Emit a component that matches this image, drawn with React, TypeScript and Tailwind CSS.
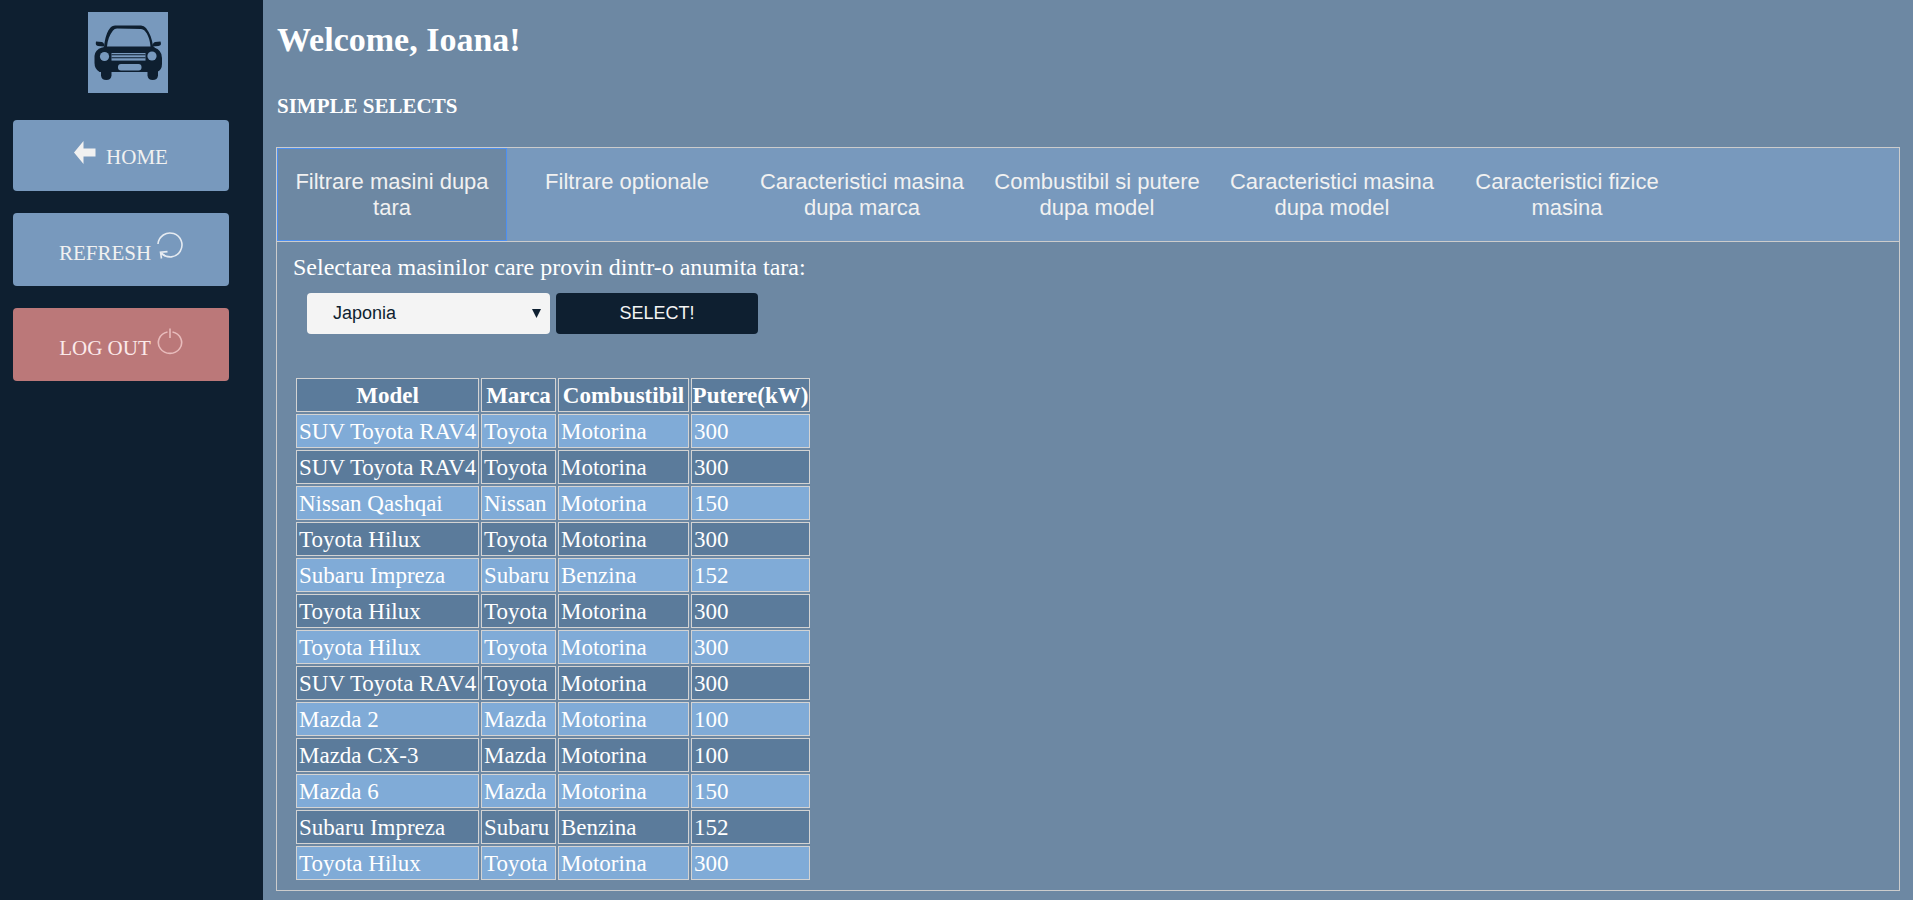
import { useState } from 'react';

const tabs = [
  'Filtrare masini dupa tara',
  'Filtrare optionale',
  'Caracteristici masina dupa marca',
  'Combustibil si putere dupa model',
  'Caracteristici masina dupa model',
  'Caracteristici fizice masina',
];

const cars = [
  ['SUV Toyota RAV4', 'Toyota', 'Motorina', '300'],
  ['SUV Toyota RAV4', 'Toyota', 'Motorina', '300'],
  ['Nissan Qashqai', 'Nissan', 'Motorina', '150'],
  ['Toyota Hilux', 'Toyota', 'Motorina', '300'],
  ['Subaru Impreza', 'Subaru', 'Benzina', '152'],
  ['Toyota Hilux', 'Toyota', 'Motorina', '300'],
  ['Toyota Hilux', 'Toyota', 'Motorina', '300'],
  ['SUV Toyota RAV4', 'Toyota', 'Motorina', '300'],
  ['Mazda 2', 'Mazda', 'Motorina', '100'],
  ['Mazda CX-3', 'Mazda', 'Motorina', '100'],
  ['Mazda 6', 'Mazda', 'Motorina', '150'],
  ['Subaru Impreza', 'Subaru', 'Benzina', '152'],
  ['Toyota Hilux', 'Toyota', 'Motorina', '300'],
];

function CarLogo() {
  return (
    <svg viewBox="0 0 80 81" className="block h-[81px] w-20 bg-[#7899bd]" role="img" aria-label="Car">
      <g fill="#0e1f30">
        <path
          fillRule="evenodd"
          d="M16 35 C17 26 19 19 23 15 Q24.500 13.500 27 13.500 L53 13.500 Q56 13.500 58 16 C62 21 64 27 65 34 L68 37 L13 37 Z M19 34.500 L62.500 34.500 C62 28 60 22 56.500 18.500 Q55 17 53 17 L29 16.500 Q26.500 16.500 25 18.500 C21.500 23 19.500 28 19 34.500 Z"
        />
        <path d="M8 29.500 L14 30 Q17 31.500 16 34.500 L10 34 Q7 33.500 8 29.500 Z" />
        <path d="M72.500 29.500 L67 30 Q64 31.500 64.500 34.500 L70.500 34 Q74 33.500 72.500 29.500 Z" />
        <path d="M14 35.500 L66 35.500 Q74 38 74 46 L74 52 Q74 58 69 60 L11.500 60 Q6.500 57 6.500 51 L6.500 44 Q7 37.500 14 35.500 Z" />
        <path d="M13 57 H23.500 V63.500 Q23 68 18.300 68 Q13.500 68 13 63.500 Z" />
        <path d="M59.500 57 H70 V63.500 Q69.500 68 64.700 68 Q60 68 59.500 63.500 Z" />
      </g>
      <g fill="#7899bd">
        <circle cx="16.500" cy="44.500" r="4.600" />
        <circle cx="64" cy="44" r="4.600" />
        <rect x="23.500" y="41" width="34" height="7.600" />
        <rect x="30" y="52" width="23.500" height="6.500" rx="3" />
      </g>
      <path d="M23.500 42.700h34M23.500 45.800h34" stroke="#0e1f30" strokeWidth="1.100" />
    </svg>
  );
}

function ArrowIcon() {
  return (
    <svg viewBox="0 0 22 23" className="h-[23px] w-[22px]" aria-hidden="true">
      <path d="M0 11.500 L9.500 0 V7.500 H21.500 V15.500 H9.500 V23 Z" fill="#f1f1f1" />
    </svg>
  );
}

function RefreshIcon() {
  return (
    <svg viewBox="0 0 26 28" className="h-7 w-[26px]" fill="none" stroke="#e6ebf1" strokeWidth="1.600" aria-hidden="true">
      <path d="M1 12 A12 12 0 1 1 4.500 21.500 Q8 24.600 13 24.900" />
      <path d="M10.500 19.600 L3.500 20.300 L4.500 26.500 M3.500 20.300 L8 23.800" />
    </svg>
  );
}

function PowerIcon() {
  return (
    <svg viewBox="0 0 26 28" className="h-7 w-[26px]" fill="none" stroke="#e8bcbc" strokeWidth="1.600" aria-hidden="true">
      <path d="M10.500 5 A11.600 10.800 0 1 0 15.500 5" />
      <path d="M13 1.500 V11" />
    </svg>
  );
}

export default function App() {
  const [active, setActive] = useState(0);
  return (
    <div className="flex min-h-screen bg-[#6d88a3] font-['Palatino_Linotype','Liberation_Serif',serif] text-white">
      <aside className="flex w-[263px] shrink-0 flex-col bg-[#0e1f30] pr-[34px] pl-[13px] text-[21px] leading-7 text-[#f1f1f1]">
        <div className="flex justify-center pt-3 pb-[27px] pl-[14px]">
          <CarLogo />
        </div>
        <nav className="flex flex-col gap-[22px]">
          <a href="#home" className="flex items-baseline justify-center gap-[10px] rounded bg-[#7899bd] pt-[21px] pb-5">
            <ArrowIcon />
            HOME
          </a>
          <button type="button" className="flex items-baseline justify-center gap-[6px] rounded bg-[#7899bd] pt-[19px] pb-[19px]">
            REFRESH
            <RefreshIcon />
          </button>
          <button type="button" className="flex items-baseline justify-center gap-[6px] rounded bg-[#bb7879] pt-[19px] pb-[19px] text-[#fbeaea]">
            LOG OUT
            <PowerIcon />
          </button>
        </nav>
      </aside>

      <main className="min-w-0 flex-1 pt-5 pr-[13px] pb-[9px] pl-[13px]">
        <h1 className="pl-px text-[34px] leading-10 font-bold">Welcome, Ioana!</h1>
        <h2 className="mt-[31px] mb-[26px] pl-px text-[21px] leading-[30px] font-bold">SIMPLE SELECTS</h2>

        <section className="border border-[#cccccc]">
          <div
            role="tablist"
            className="flex gap-[5px] border-b border-[#cccccc] bg-[#7899bd] font-['Liberation_Sans',Arial,sans-serif] text-[22px] leading-[26px] text-[#f1f1f1]"
          >
            {tabs.map((tab, i) => (
              <button
                key={tab}
                type="button"
                role="tab"
                aria-selected={i === active}
                onClick={() => setActive(i)}
                className={
                  i === active
                    ? 'flex h-[93px] w-[230px] justify-center border border-[#4d8ff0] bg-[#6d88a3] px-[14px] pt-5 outline-none'
                    : 'flex h-[93px] w-[230px] justify-center border border-transparent px-[10px] pt-5 outline-none'
                }
              >
                {tab}
              </button>
            ))}
          </div>

          <div className="px-4 pt-[10px] pb-2">
            <label htmlFor="tara" className="block text-[24px] leading-[30px]">
              Selectarea masinilor care provin dintr-o anumita tara:
            </label>
            <div className="mt-[11px] flex gap-[6px] pl-[14px] font-['Liberation_Sans',Arial,sans-serif] text-[18px]">
              <div className="relative w-[243px]">
                <select
                  id="tara"
                  defaultValue="Japonia"
                  className="h-[41px] w-full appearance-none rounded bg-[#f4f4f4] px-[26px] text-[#0e1f30]"
                >
                  <option>Japonia</option>
                </select>
                <svg viewBox="0 0 9 9" className="pointer-events-none absolute top-4 right-[9px] size-[9px]" aria-hidden="true">
                  <path d="M0 0 H9 L4.500 9 Z" fill="#0e1f30" />
                </svg>
              </div>
              <button type="button" className="h-[41px] w-[202px] rounded bg-[#0e1f30] text-[#f4f4f4]">
                SELECT!
              </button>
            </div>

            <table className="mt-[42px] ml-[1px] border-separate border-spacing-[2px] text-left text-[23px] leading-[30px]">
              <thead>
                <tr className="bg-[#5b7b9b]">
                  <th scope="col" className="min-w-[183px] border border-[#d3d3d3] pt-[2px] text-center">Model</th>
                  <th scope="col" className="min-w-[75px] border border-[#d3d3d3] pt-[2px] text-center">Marca</th>
                  <th scope="col" className="min-w-[131px] border border-[#d3d3d3] pt-[2px] text-center">Combustibil</th>
                  <th scope="col" className="min-w-[119px] border border-[#d3d3d3] pt-[2px] text-center">Putere(kW)</th>
                </tr>
              </thead>
              <tbody>
                {cars.map((car, r) => (
                  <tr key={r} className="odd:bg-[#80abd7] even:bg-[#5b7b9b]">
                    {car.map((value, c) => (
                      <td key={c} className="border border-[#d3d3d3] pt-[2px] pl-[2px] whitespace-nowrap">
                        {value}
                      </td>
                    ))}
                  </tr>
                ))}
              </tbody>
            </table>
          </div>
        </section>
      </main>
    </div>
  );
}
